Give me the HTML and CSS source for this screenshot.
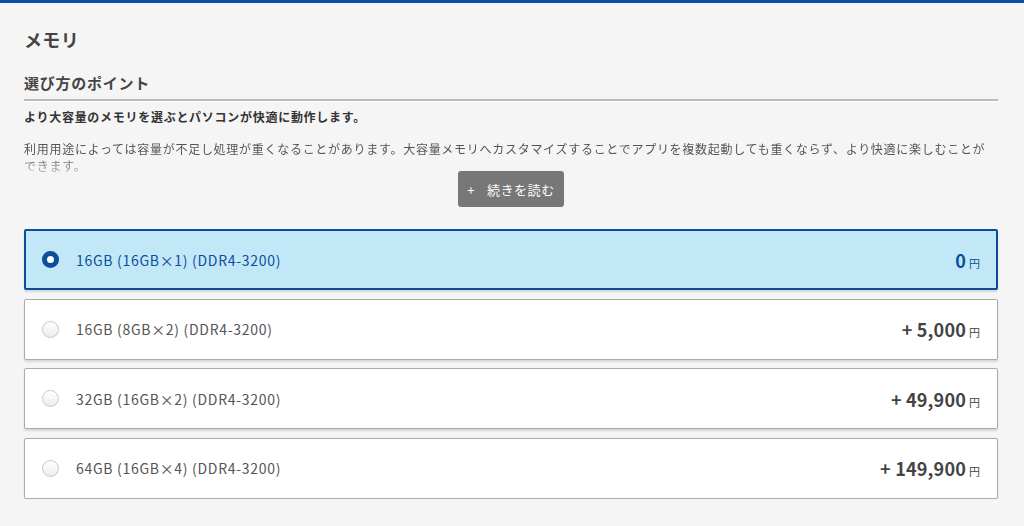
FILE: index.html
```html
<!DOCTYPE html>
<html lang="ja">
<head>
<meta charset="utf-8">
<link rel="stylesheet" href="styles.css">
</head>
<body>
<div class="page">
  <h1 class="title">メモリ</h1>
  <h2 class="subtitle">選び方のポイント</h2>
  <p class="lead">より大容量のメモリを選ぶとパソコンが快適に動作します。</p>
  <p class="desc">利用用途によっては容量が不足し処理が重くなることがあります。大容量メモリへカスタマイズすることでアプリを複数起動しても重くならず、より快適に楽しむことができます。</p>
  <div class="more-wrap"><button class="more"><span class="plus">+</span>続きを読む</button></div>
  <ul class="options">
    <li class="option selected"><span class="radio"></span><span class="label">16GB (16GB×1) (DDR4-3200)</span><span class="price"><b>0</b><small>円</small></span></li>
    <li class="option"><span class="radio"></span><span class="label">16GB (8GB×2) (DDR4-3200)</span><span class="price"><b>+ 5,000</b><small>円</small></span></li>
    <li class="option"><span class="radio"></span><span class="label">32GB (16GB×2) (DDR4-3200)</span><span class="price"><b>+ 49,900</b><small>円</small></span></li>
    <li class="option"><span class="radio"></span><span class="label">64GB (16GB×4) (DDR4-3200)</span><span class="price"><b>+ 149,900</b><small>円</small></span></li>
  </ul>
</div>
</body>
</html>
```

FILE: styles.css
```css
html, body {
  margin: 0;
  padding: 0;
}
body {
  background: #f5f5f5;
  border-top: 3px solid #0b4ea2;
  font-family: "Noto Sans CJK JP", "Noto Sans", sans-serif;
  color: #444;
}
.page {
  padding: 23px 26px 0 24px;
}
.title {
  margin: 0;
  font-size: 18px;
  line-height: 27px;
  font-weight: 700;
  color: #444;
  letter-spacing: 0.02em;
}
.subtitle {
  margin: 18px 0 0;
  font-size: 15px;
  line-height: 24px;
  font-weight: 700;
  color: #444;
  letter-spacing: 0.05em;
  padding-bottom: 4px;
  border-bottom: 2px solid #bbb;
  box-shadow: 0 1px 0 #fff;
}
.lead {
  margin: 7px 0 0;
  font-size: 12px;
  line-height: 18px;
  font-weight: 700;
  color: #333;
  letter-spacing: 0.06em;
}
.desc {
  margin: 14px 0 0;
  font-size: 12px;
  line-height: 17px;
  color: #555;
  letter-spacing: 0.06em;
  height: 34px;
  overflow: hidden;
  -webkit-mask-image: linear-gradient(to bottom, #000 45%, rgba(0,0,0,0.35) 100%);
  mask-image: linear-gradient(to bottom, #000 45%, rgba(0,0,0,0.35) 100%);
}
.more-wrap {
  display: flex;
  justify-content: center;
  margin-top: -3px;
}
.more {
  width: 106px;
  height: 36px;
  border: none;
  border-radius: 3px;
  background: #777;
  color: #fff;
  font-family: inherit;
  font-size: 13px;
  letter-spacing: 0.04em;
  display: flex;
  align-items: center;
  justify-content: center;
  padding: 0;
  cursor: pointer;
}
.plus {
  margin-right: 12px;
  font-size: 13px;
}
.options {
  list-style: none;
  margin: 22px 0 0;
  padding: 0;
  display: flex;
  flex-direction: column;
  gap: 8.5px;
}
.option {
  box-sizing: border-box;
  height: 61px;
  display: flex;
  align-items: center;
  background: #fff;
  border: 1px solid #aaa;
  border-radius: 2px;
  box-shadow: 0 2px 2px rgba(0,0,0,0.12);
  padding: 0 17px 0 17px;
}
.option.selected {
  background: #c2e8f8;
  border: 2px solid #0b4e9c;
  padding: 0 16px;
}
.radio {
  box-sizing: border-box;
  width: 17px;
  height: 17px;
  border-radius: 50%;
  border: 1px solid #c8c8c8;
  background: linear-gradient(#fff, #ececec);
  flex: none;
}
.selected .radio {
  border: 5px solid #0b4e9c;
  background: #fff;
}
.label {
  margin-left: 17px;
  font-size: 14px;
  color: #555;
  letter-spacing: 0.05em;
  flex: 1;
}
.selected .label {
  color: #0b4e9c;
}
.price {
  display: flex;
  align-items: baseline;
  color: #444;
}
.price b {
  font-size: 18px;
  font-weight: 700;
  letter-spacing: 0.01em;
}
.price small {
  font-size: 11px;
  margin-left: 3px;
}
.selected .price {
  color: #0b4e9c;
}
```
